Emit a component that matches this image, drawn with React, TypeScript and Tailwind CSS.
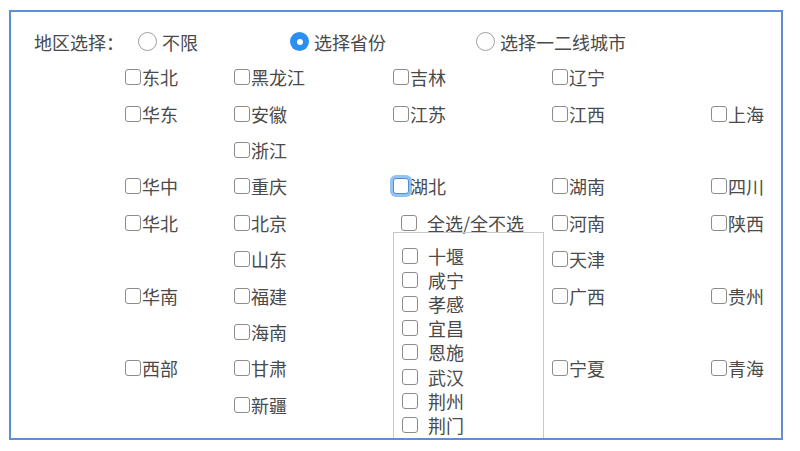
import React from "react";

// 行数据：每个单元格 [列, 文本]，col 0 是大区
type Cell = { col: number; text: string; focus?: boolean };

const rows: Cell[][] = [
  [{ col: 0, text: "东北" }, { col: 1, text: "黑龙江" }, { col: 2, text: "吉林" }, { col: 3, text: "辽宁" }],
  [{ col: 0, text: "华东" }, { col: 1, text: "安徽" }, { col: 2, text: "江苏" }, { col: 3, text: "江西" }, { col: 4, text: "上海" }],
  [{ col: 1, text: "浙江" }],
  [{ col: 0, text: "华中" }, { col: 1, text: "重庆" }, { col: 2, text: "湖北", focus: true }, { col: 3, text: "湖南" }, { col: 4, text: "四川" }],
  [{ col: 0, text: "华北" }, { col: 1, text: "北京" }, { col: 3, text: "河南" }, { col: 4, text: "陕西" }],
  [{ col: 1, text: "山东" }, { col: 3, text: "天津" }],
  [{ col: 0, text: "华南" }, { col: 1, text: "福建" }, { col: 3, text: "广西" }, { col: 4, text: "贵州" }],
  [{ col: 1, text: "海南" }],
  [{ col: 0, text: "西部" }, { col: 1, text: "甘肃" }, { col: 3, text: "宁夏" }, { col: 4, text: "青海" }],
  [{ col: 1, text: "新疆" }],
];

const cities = ["十堰", "咸宁", "孝感", "宜昌", "恩施", "武汉", "荆州", "荆门"];

const colStart = ["col-start-1", "col-start-2", "col-start-3", "col-start-4", "col-start-5"];
const rowStart = [
  "row-start-1", "row-start-2", "row-start-3", "row-start-4", "row-start-5",
  "row-start-6", "row-start-7", "row-start-8", "row-start-9", "row-start-10",
];

function Box({ focus }: { focus?: boolean }) {
  return (
    <span
      className={`inline-block w-[16px] h-[16px] shrink-0 rounded-[3px] bg-white border-[1.5px] ${
        focus ? "border-[#4a8fd8] shadow-[0_0_0_3px_rgba(110,175,240,0.75)]" : "border-[#8c8c8c]"
      }`}
    />
  );
}

function Radio({ checked, label, width }: { checked?: boolean; label: string; width: string }) {
  return (
    <div className={`flex items-center gap-[5px] ${width}`}>
      {checked ? (
        <span className="w-[19px] h-[19px] rounded-full bg-[#2b8ef0] flex items-center justify-center">
          <span className="w-[6px] h-[6px] rounded-full bg-white" />
        </span>
      ) : (
        <span className="w-[19px] h-[19px] rounded-full border-[1.5px] border-[#a0a0a0] bg-white" />
      )}
      <span>{label}</span>
    </div>
  );
}

export default function App() {
  return (
    <div className="w-[800px] h-[451px] bg-white pt-[10px] pl-[9px]">
      <div
        className="w-[774px] h-[430px] border-2 border-[#5f8fd3] overflow-hidden text-[18px] text-[#4a4a4a] leading-none"
        style={{ fontFamily: '"Noto Sans CJK SC", "Noto Sans", sans-serif' }}
      >
        {/* 顶部单选 */}
        <div className="flex items-center h-[35px] mt-[12px] pl-[23px]">
          <span className="w-[104px]">地区选择：</span>
          <Radio label="不限" width="w-[152px]" />
          <Radio label="选择省份" checked width="w-[186px]" />
          <Radio label="选择一二线城市" width="w-auto" />
        </div>

        {/* 省份表格 */}
        <div className="ml-[114px] grid grid-cols-[109px_159px_159px_159px_1fr] auto-rows-[36.4px]">
          {rows.map((row, r) =>
            row.map((c) => (
              <label
                key={c.text}
                className={`${colStart[c.col]} ${rowStart[r]} flex items-center gap-[1px]`}
              >
                <Box focus={c.focus} />
                <span>{c.text}</span>
              </label>
            ))
          )}

          {/* 湖北 展开的城市列表 */}
          <div className="col-start-3 row-start-5 row-span-6 flex flex-col">
            <div className="flex items-center gap-[10px] h-[24px] mt-[9px] pl-[8px]">
              <Box />
              <span>全选/全不选</span>
            </div>
            <div className="w-[151px] border border-[#c8c8c8] pt-[11px] pb-[40px] pl-[8px] flex flex-col shrink-0">
              {cities.map((city) => (
                <div key={city} className="flex items-center gap-[10px] h-[24.2px]">
                  <Box />
                  <span>{city}</span>
                </div>
              ))}
            </div>
          </div>
        </div>
      </div>
    </div>
  );
}
